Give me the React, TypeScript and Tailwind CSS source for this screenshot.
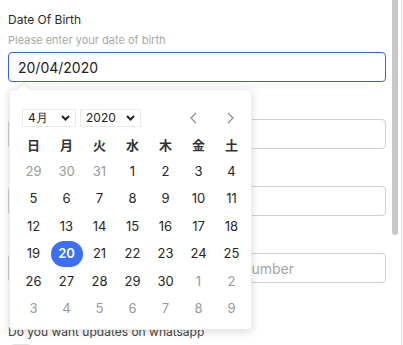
import React from "react";

const weekdays = ["日", "月", "火", "水", "木", "金", "土"];

type Day = { n: number; muted?: boolean; selected?: boolean };

const weeks: Day[][] = [
  [{ n: 29, muted: true }, { n: 30, muted: true }, { n: 31, muted: true }, { n: 1 }, { n: 2 }, { n: 3 }, { n: 4 }],
  [{ n: 5 }, { n: 6 }, { n: 7 }, { n: 8 }, { n: 9 }, { n: 10 }, { n: 11 }],
  [{ n: 12 }, { n: 13 }, { n: 14 }, { n: 15 }, { n: 16 }, { n: 17 }, { n: 18 }],
  [{ n: 19 }, { n: 20, selected: true }, { n: 21 }, { n: 22 }, { n: 23 }, { n: 24 }, { n: 25 }],
  [{ n: 26 }, { n: 27 }, { n: 28 }, { n: 29 }, { n: 30 }, { n: 1, muted: true }, { n: 2, muted: true }],
  [{ n: 3, muted: true }, { n: 4, muted: true }, { n: 5, muted: true }, { n: 6, muted: true }, { n: 7, muted: true }, { n: 8, muted: true }, { n: 9, muted: true }],
];

function ChevronDown() {
  return (
    <svg width="9" height="6" viewBox="0 0 9 6" fill="none">
      <path d="M1 1l3.5 3.5L8 1" stroke="#222" strokeWidth="2" />
    </svg>
  );
}

function NavArrow({ dir }: { dir: "left" | "right" }) {
  return (
    <svg width="7" height="12" viewBox="0 0 7 12" fill="none">
      <path d={dir === "left" ? "M6 1L1 6l5 5" : "M1 1l5 5-5 5"} stroke="#8a8a8a" strokeWidth="1.2" />
    </svg>
  );
}

function Field({ placeholder }: { placeholder?: string }) {
  return (
    <div className="h-[30px] rounded-[4px] border border-[#cfcfd4] px-[9px] flex items-center text-[14px] text-[#a5a5a5] whitespace-nowrap">
      {placeholder}
    </div>
  );
}

function DatePopover() {
  return (
    <div className="absolute left-[9px] top-[89px] w-[243px] h-[241px] bg-white rounded-[4px] border border-[#ececec] shadow-[0_2px_8px_rgba(0,0,0,0.15)]">
      <div className="absolute -top-[6px] left-[8px] w-[11px] h-[11px] bg-white border-l border-t border-[#e6e6e6] rotate-45" />
      <div className="relative flex items-center pt-[19px] pl-[12px] pr-[15px]">
        <div className="w-[54px] h-[18px] border border-[#ebebeb] flex items-center justify-between px-[5px] text-[12px] text-[#222]">
          <span>4月</span>
          <ChevronDown />
        </div>
        <div className="ml-[4px] w-[61px] h-[18px] border border-[#ebebeb] flex items-center justify-between px-[5px] text-[12px] text-[#222]">
          <span>2020</span>
          <ChevronDown />
        </div>
        <div className="ml-auto flex items-center gap-[30px] pr-[2px]">
          <NavArrow dir="left" />
          <NavArrow dir="right" />
        </div>
      </div>
      <div className="pl-[7px] pt-[4px] grid grid-cols-[repeat(7,33px)]">
        {weekdays.map((w) => (
          <div
            key={w}
            className="h-[27px] flex items-center justify-center text-[13px] font-bold text-[#333] font-['Noto_Sans_CJK_JP',sans-serif]"
          >
            {w}
          </div>
        ))}
        {weeks.flat().map((d, i) => (
          <div key={i} className="h-[27.4px] flex items-center justify-center">
            {d.selected ? (
              <span className="w-[32px] h-[26px] rounded-full bg-[#3d6ff6] text-white flex items-center justify-center text-[13px] font-semibold">
                {d.n}
              </span>
            ) : (
              <span className={`text-[13px] ${d.muted ? "text-[#9a9a9a]" : "text-[#262626]"}`}>{d.n}</span>
            )}
          </div>
        ))}
      </div>
    </div>
  );
}

export default function App() {
  return (
    <div className="relative w-[403px] h-[345px] overflow-hidden bg-white flex font-['Inter',sans-serif]">
      <div className="w-[392px] pl-[8px] pr-[6px]">
        <div className="pt-[13px] text-[12px] text-[#2b2b2b] leading-[14px]">Date Of Birth</div>
        <div className="mt-[6px] text-[11px] text-[#a8a8a8] leading-[14px]">Please enter your date of birth</div>
        <div className="mt-[5px] h-[30px] rounded-[4px] border border-[#3463dc] px-[9px] flex items-center text-[14px] text-[#222]">
          20/04/2020
        </div>
        <div className="mt-[37px]">
          <Field />
        </div>
        <div className="mt-[37px]">
          <Field />
        </div>
        <div className="mt-[37px]">
          <Field placeholder="Please enter the whatsapp phone number" />
        </div>
        <div className="mt-[42px] text-[12px] text-[#444] leading-[14px]">Do you want updates on whatsapp</div>
        <div className="mt-[3px] flex items-center gap-[7px]">
          <div className="w-[26px] h-[14px] rounded-full bg-[#e4e4e4]" />
          <span className="text-[12px] text-[#a8a8a8]">Disabled</span>
        </div>
      </div>
      <div className="flex-1 flex">
        <div className="w-[6px] h-[235px] rounded-b-[3px] bg-[#c8c8c8]" />
        <div className="ml-[3px] w-px bg-[#e3e3e3]" />
        <div className="flex-1 bg-[#f7f7f7]" />
      </div>
      <DatePopover />
    </div>
  );
}
